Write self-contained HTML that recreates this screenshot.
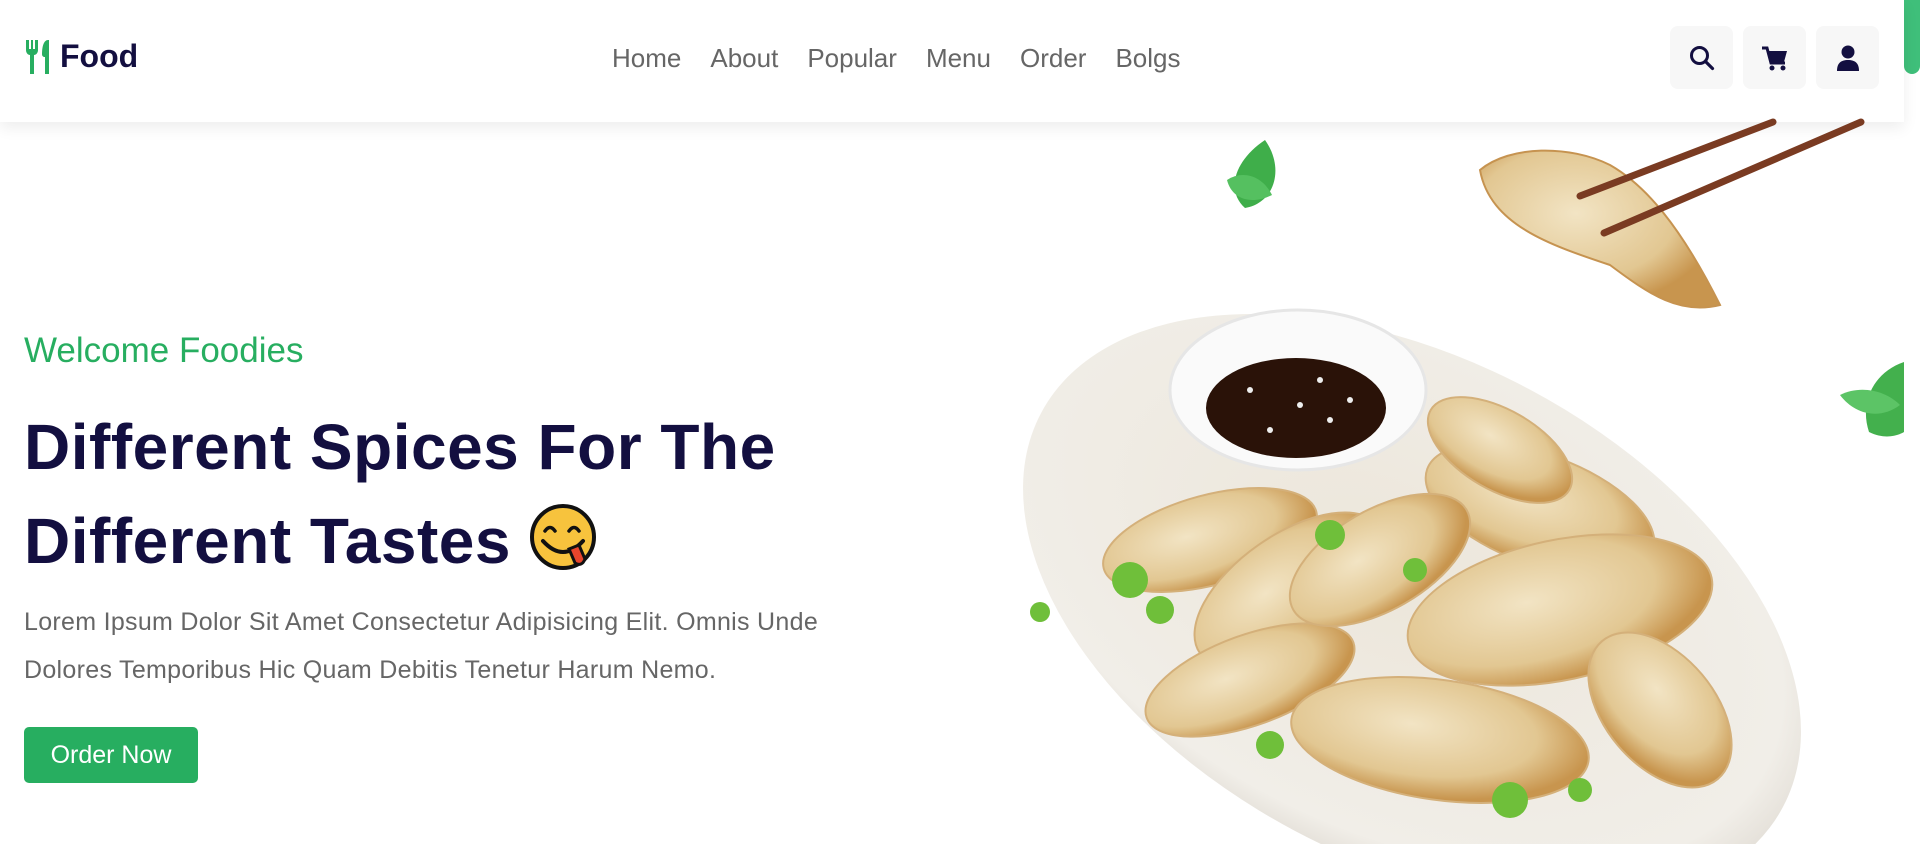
<!DOCTYPE html>
<html><head><meta charset="utf-8"><style>
*{margin:0;padding:0;box-sizing:border-box}
html,body{width:1920px;height:844px;overflow:hidden}
body{background:#fff;font-family:"Liberation Sans",sans-serif;position:relative}
header{position:absolute;left:0;top:0;width:1904px;height:122px;background:#fff;box-shadow:0 6px 14px rgba(0,0,0,.07);z-index:5}
.logo{position:absolute;left:24px;top:38px;font-size:32px;font-weight:bold;color:#130f40;display:flex;align-items:center;gap:6px}
nav{position:absolute;left:612px;top:43px;font-size:26px;color:#666;display:flex;gap:29px}
.btn{position:absolute;top:26px;width:63px;height:63px;background:#f7f7f7;border-radius:8px;display:flex;align-items:center;justify-content:center}
.sb{position:absolute;left:1904px;top:0;width:16px;height:74px;background:#3fbf7a;border-radius:0 0 8px 8px}
.w{position:absolute;left:24px;top:331px;font-size:35px;color:#27ae60}
h1{position:absolute;left:24px;top:400px;font-size:64px;line-height:94px;color:#130f40;font-weight:bold;letter-spacing:.5px}
p{position:absolute;left:24px;top:598px;font-size:25px;letter-spacing:.3px;line-height:48px;color:#666;width:860px}
.ord{position:absolute;left:24px;top:727px;width:174px;height:56px;background:#27ae60;color:#fff;font-size:25px;border-radius:5px;display:flex;align-items:center;justify-content:center}
</style></head><body>
<header>
<div class="logo"><svg width="30" height="34" viewBox="0 0 30 34"><path d="M2 0v10c0 3 2 5 4 5v19h4V15c2 0 4-2 4-5V0h-3v9H9V0H7v9H5V0z" fill="#27ae60"/><path d="M24 0c-4 0-6 6-6 14 0 2 1 3 3 3v17h4V0z" fill="#27ae60"/></svg>Food</div>
<nav><span>Home</span><span>About</span><span>Popular</span><span>Menu</span><span>Order</span><span>Bolgs</span></nav>
<div class="btn" style="left:1670px"><svg width="26" height="26" viewBox="0 0 26 26"><circle cx="10.5" cy="10.5" r="8" fill="none" stroke="#130f40" stroke-width="3"/><path d="M16.5 16.5L23.5 23.5" stroke="#130f40" stroke-width="3.2" stroke-linecap="round"/></svg></div>
<div class="btn" style="left:1743px"><svg width="28" height="26" viewBox="0 0 28 26"><path d="M1 2h5l1 4h19l-3 11H9L6 4" fill="#130f40"/><path d="M1 3h5l4 15h14" fill="none" stroke="#130f40" stroke-width="3"/><circle cx="11" cy="23" r="2.5" fill="#130f40"/><circle cx="22" cy="23" r="2.5" fill="#130f40"/></svg></div>
<div class="btn" style="left:1816px"><svg width="24" height="26" viewBox="0 0 24 26"><circle cx="12" cy="7" r="6.5" fill="#130f40"/><path d="M1 26c0-8 4-11 11-11s11 3 11 11z" fill="#130f40"/></svg></div>
</header>
<div class="sb"></div>
<div class="w">Welcome Foodies</div>
<h1>Different Spices For The<br>Different Tastes <svg width="74" height="68" viewBox="0 0 74 68" style="vertical-align:-8px"><circle cx="34" cy="34" r="31" fill="#f7c33d" stroke="#111" stroke-width="4"/><path d="M16 28q5-7 10 0M40 28q5-7 10 0" fill="none" stroke="#111" stroke-width="3.5" stroke-linecap="round"/><path d="M14 38q20 22 40 0" fill="none" stroke="#111" stroke-width="4" stroke-linecap="round"/><path d="M40 46l10-4 6 14q-3 8-10 4z" fill="#e8452c" stroke="#111" stroke-width="3"/></svg></h1>
<p>Lorem Ipsum Dolor Sit Amet Consectetur Adipisicing Elit. Omnis Unde Dolores Temporibus Hic Quam Debitis Tenetur Harum Nemo.</p>
<div class="ord">Order Now</div>
<svg style="position:absolute;left:0;top:0;z-index:6" width="1904" height="844" viewBox="0 0 1904 844">
<defs><radialGradient id="pl" cx=".45" cy=".45" r=".6"><stop offset="0" stop-color="#ece6da"/><stop offset=".85" stop-color="#f1eee8"/><stop offset="1" stop-color="#dcd7cf"/></radialGradient>
<radialGradient id="dp" cx=".4" cy=".4" r=".6"><stop offset="0" stop-color="#f2e4c4"/><stop offset=".7" stop-color="#e2c792"/><stop offset="1" stop-color="#c8954e"/></radialGradient></defs>
<ellipse cx="1412" cy="610" rx="420" ry="250" transform="rotate(28 1412 610)" fill="url(#pl)"/>
<g fill="url(#dp)" stroke="#d4b07a" stroke-width="2">
<ellipse cx="1210" cy="540" rx="110" ry="45" transform="rotate(-15 1210 540)"/>
<ellipse cx="1290" cy="590" rx="110" ry="55" transform="rotate(-35 1290 590)"/>
<ellipse cx="1540" cy="510" rx="120" ry="55" transform="rotate(20 1540 510)"/>
<ellipse cx="1500" cy="450" rx="80" ry="40" transform="rotate(30 1500 450)"/>
<ellipse cx="1250" cy="680" rx="110" ry="45" transform="rotate(-20 1250 680)"/>
<ellipse cx="1560" cy="610" rx="155" ry="70" transform="rotate(-12 1560 610)"/>
<ellipse cx="1660" cy="710" rx="90" ry="55" transform="rotate(50 1660 710)"/>
<ellipse cx="1440" cy="740" rx="150" ry="60" transform="rotate(8 1440 740)"/>
<ellipse cx="1380" cy="560" rx="100" ry="50" transform="rotate(-30 1380 560)"/>
</g>
<ellipse cx="1298" cy="390" rx="128" ry="80" fill="#fafafa" stroke="#e6e6e6" stroke-width="3"/>
<ellipse cx="1296" cy="408" rx="90" ry="50" fill="#2a1208"/>
<g fill="#eee"><circle cx="1250" cy="390" r="3"/><circle cx="1300" cy="405" r="3"/><circle cx="1330" cy="420" r="3"/><circle cx="1270" cy="430" r="3"/><circle cx="1320" cy="380" r="3"/><circle cx="1350" cy="400" r="3"/></g>
<g fill="#6fbf3a"><circle cx="1130" cy="580" r="18"/><circle cx="1160" cy="610" r="14"/><circle cx="1040" cy="612" r="10"/><circle cx="1330" cy="535" r="15"/><circle cx="1415" cy="570" r="12"/><circle cx="1510" cy="800" r="18"/><circle cx="1580" cy="790" r="12"/><circle cx="1270" cy="745" r="14"/></g>
<path d="M1480 170c30-25 90-25 130-5 35 20 70 60 110 140-40 10-70-10-110-40-60-20-120-40-130-95z" fill="url(#dp)" stroke="#c69350" stroke-width="2"/>
<path d="M1604 233L1861 122M1580 196L1773 122" stroke="#7a3b22" stroke-width="7" stroke-linecap="round"/>
<path d="M1265 140c-30 20-40 50-20 68 30-5 40-40 20-68z" fill="#3fae4a"/><path d="M1227 180c15-10 35-5 45 15-20 10-40 5-45-15z" fill="#55c060"/>
<path d="M1904 362c-30 10-45 40-35 70 20 10 35 0 35 0z" fill="#43b04d"/><path d="M1840 395c20-10 45-5 60 10-20 15-45 10-60-10z" fill="#5cc466"/>
</svg>
</body></html>
